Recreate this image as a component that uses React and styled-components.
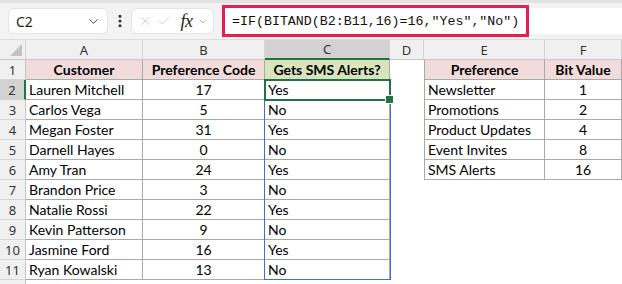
import React from "react";
import styled, { createGlobalStyle } from "styled-components";
import { ChevronDown, X, Check, EllipsisVertical } from "lucide-react";

const GlobalStyle = createGlobalStyle`
  html, body {
    margin: 0;
    padding: 0;
    background: #ffffff;
    overflow: hidden;
  }
  * {
    box-sizing: border-box;
  }
`;

const UI_FONT = `"Noto Sans", "Open Sans", sans-serif`;
const CELL_FONT = `Lato, "Liberation Sans", sans-serif`;

const Page = styled.div`
  width: 622px;
  height: 284px;
  display: flex;
  flex-direction: column;
  overflow: hidden;
`;

const Toolbar = styled.div`
  height: 40px;
  flex-shrink: 0;
  background: #f3f3f3;
  border-top: 3px solid #e3e3e3;
  border-bottom: 1px solid #dcdcdc;
  display: flex;
  align-items: center;
  padding: 0 0 0 8px;
`;

const NameBox = styled.div`
  width: 100px;
  height: 26px;
  background: #ffffff;
  border: 1px solid #e4e4e4;
  border-radius: 6px;
  display: flex;
  align-items: center;
  justify-content: space-between;
  padding: 0 6px 0 7px;
  font-family: ${UI_FONT};
  font-size: 14px;
  color: #1f1f1f;
`;

const Dots = styled.div`
  width: 23px;
  display: flex;
  justify-content: center;
  color: #333;
`;

const FnBox = styled.div`
  width: 83px;
  height: 26px;
  background: #ffffff;
  border: 1px solid #e4e4e4;
  border-radius: 6px;
  display: flex;
  align-items: center;
  gap: 5px;
  padding: 0 4px 0 6px;
  color: #c4c4c4;
`;

const Fx = styled.span`
  font-family: "Liberation Serif", serif;
  font-style: italic;
  font-size: 18px;
  color: #222;
  margin-left: 4px;
  letter-spacing: -0.5px;
`;

const FormulaBar = styled.div`
  position: relative;
  flex: 1;
  height: 26px;
  margin-left: 8px;
  background: #ffffff;
  border-radius: 6px 0 0 6px;
  display: flex;
  align-items: center;
  padding-left: 10px;
  font-family: "Liberation Mono", "DejaVu Sans Mono", monospace;
  font-size: 13.3px;
  color: #111;
  white-space: nowrap;
`;

const RedMark = styled.div`
  position: absolute;
  left: 0;
  top: -3px;
  width: 307px;
  height: 32px;
  border: 3px solid #e3204f;
  pointer-events: none;
`;

const Sheet = styled.div`
  position: relative;
  display: grid;
  grid-template-columns: 26px 117px 122px 125px 34px 121px 77px;
  grid-auto-rows: 20px;
  background: #ffffff;
`;

const ColHead = styled.div`
  background: ${(p) => (p.$active ? "#d2d2d2" : "#f0f0f0")};
  border-right: 1px solid #d4d4d4;
  border-bottom: ${(p) => (p.$active ? "2px solid #217346" : "1px solid #c6c6c6")};
  display: flex;
  align-items: center;
  justify-content: center;
  font-family: ${UI_FONT};
  font-size: 13px;
  color: #333;
`;

const Corner = styled(ColHead)`
  position: relative;
  &::after {
    content: "";
    position: absolute;
    right: 3px;
    bottom: 3px;
    border-style: solid;
    border-width: 0 0 12px 12px;
    border-color: transparent transparent #c3c3c3 transparent;
  }
`;

const RowHead = styled.div`
  background: ${(p) => (p.$active ? "#d2d2d2" : "#f0f0f0")};
  border-right: ${(p) => (p.$active ? "2px solid #217346" : "1px solid #c6c6c6")};
  border-bottom: 1px solid #d4d4d4;
  display: flex;
  align-items: center;
  justify-content: center;
  font-family: ${UI_FONT};
  font-size: 13px;
  color: #333;
`;

const Cell = styled.div`
  background: ${(p) => p.$bg || "#ffffff"};
  border-right: ${(p) => (p.$lined ? "1px solid #a9a9a9" : "none")};
  border-bottom: ${(p) => (p.$lined ? "1px solid #a9a9a9" : "none")};
  border-left: ${(p) => (p.$openLeft ? "1px solid #a9a9a9" : "none")};
  display: flex;
  align-items: center;
  justify-content: ${(p) => (p.$center ? "center" : "flex-start")};
  padding: 0 3px;
  font-family: ${CELL_FONT};
  font-size: 14px;
  font-weight: ${(p) => (p.$bold ? 700 : 400)};
  color: #000;
  white-space: nowrap;
  overflow: hidden;
`;

const RangeBox = styled.div`
  position: absolute;
  left: 264px;
  top: 40px;
  width: 127px;
  height: 200px;
  border: 1px solid #3f6fc6;
  pointer-events: none;
`;

const ActiveCell = styled.div`
  position: absolute;
  left: 264px;
  top: 39px;
  width: 127px;
  height: 22px;
  border: 2px solid #217346;
  pointer-events: none;
  &::after {
    content: "";
    position: absolute;
    right: -5px;
    bottom: -5px;
    width: 7px;
    height: 7px;
    background: #217346;
    border: 1px solid #ffffff;
  }
`;

const customers = [
  ["Lauren Mitchell", 17],
  ["Carlos Vega", 5],
  ["Megan Foster", 31],
  ["Darnell Hayes", 0],
  ["Amy Tran", 24],
  ["Brandon Price", 3],
  ["Natalie Rossi", 22],
  ["Kevin Patterson", 9],
  ["Jasmine Ford", 16],
  ["Ryan Kowalski", 13],
];

const prefs = [
  ["Newsletter", 1],
  ["Promotions", 2],
  ["Product Updates", 4],
  ["Event Invites", 8],
  ["SMS Alerts", 16],
];

const PINK = "#f2dcdb";
const GREEN = "#d8e4bc";

function App() {
  return (
    <Page>
      <GlobalStyle />
      <Toolbar>
        <NameBox>
          <span>C2</span>
          <ChevronDown size={15} color="#444" strokeWidth={1.6} />
        </NameBox>
        <Dots>
          <EllipsisVertical size={16} strokeWidth={2.6} />
        </Dots>
        <FnBox>
          <X size={16} strokeWidth={1.3} />
          <Check size={16} strokeWidth={1.3} />
          <Fx>fx</Fx>
          <ChevronDown size={13} color="#888" strokeWidth={1.5} />
        </FnBox>
        <FormulaBar>
          =IF(BITAND(B2:B11,16)=16,"Yes","No")
          <RedMark />
        </FormulaBar>
      </Toolbar>

      <Sheet>
        <Corner />
        <ColHead>A</ColHead>
        <ColHead>B</ColHead>
        <ColHead $active>C</ColHead>
        <ColHead>D</ColHead>
        <ColHead>E</ColHead>
        <ColHead>F</ColHead>

        <RowHead>1</RowHead>
        <Cell $lined $bg={PINK} $bold $center>Customer</Cell>
        <Cell $lined $bg={PINK} $bold $center>Preference Code</Cell>
        <Cell $lined $bg={GREEN} $bold $center>Gets SMS Alerts?</Cell>
        <Cell />
        <Cell $lined $openLeft $bg={PINK} $bold $center>Preference</Cell>
        <Cell $lined $bg={PINK} $bold $center>Bit Value</Cell>

        {customers.map(([name, code], i) => {
          const pref = prefs[i];
          return (
            <React.Fragment key={name}>
              <RowHead $active={i === 0}>{i + 2}</RowHead>
              <Cell $lined>{name}</Cell>
              <Cell $lined $center>{code}</Cell>
              <Cell $lined>{(code & 16) === 16 ? "Yes" : "No"}</Cell>
              <Cell />
              <Cell $lined={!!pref} $openLeft={!!pref}>{pref ? pref[0] : ""}</Cell>
              <Cell $lined={!!pref} $center>{pref ? pref[1] : ""}</Cell>
            </React.Fragment>
          );
        })}

        <RowHead />

        <RangeBox />
        <ActiveCell />
      </Sheet>
    </Page>
  );
}

export default App;
